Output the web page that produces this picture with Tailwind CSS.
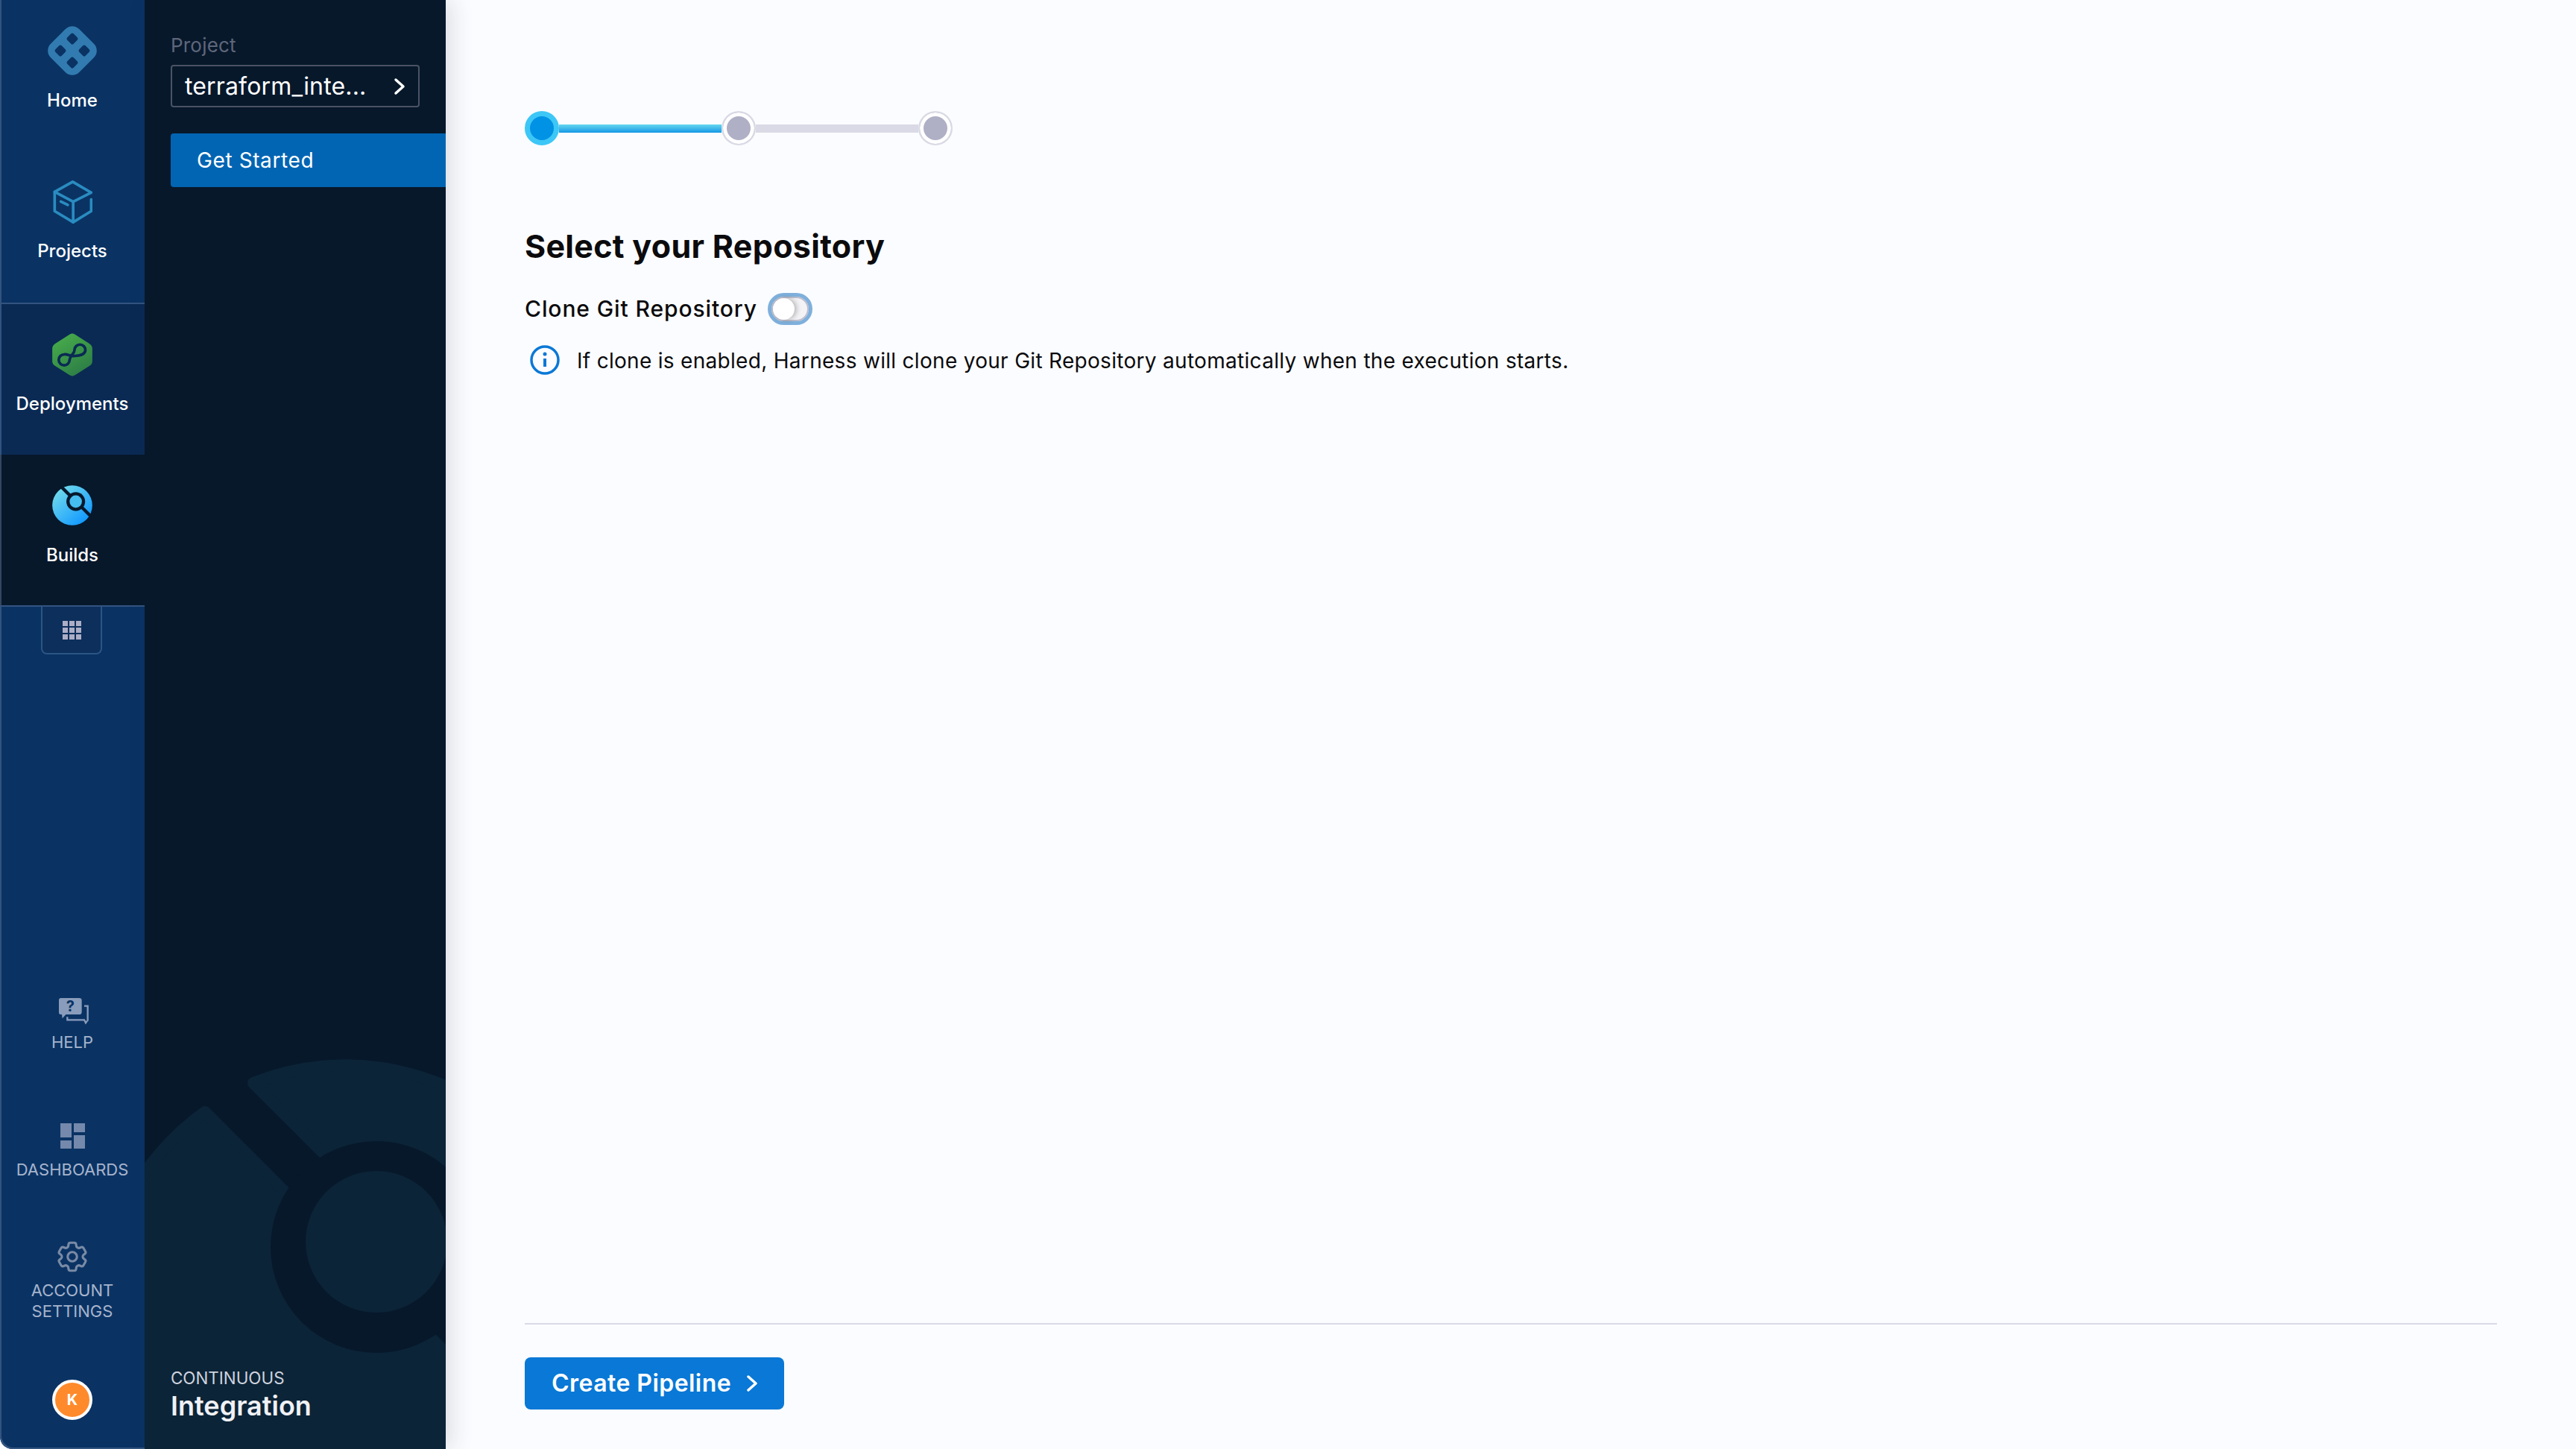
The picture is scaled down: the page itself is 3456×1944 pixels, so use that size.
<!DOCTYPE html>
<html lang="en">

<head>
  <meta charset="UTF-8">
  <title>Select your Repository</title>
  <script src="https://cdn.jsdelivr.net/npm/@tailwindcss/browser@4"></script>
</head>

<body class="bg-[#fbfcff] font-['Inter','Liberation_Sans',sans-serif]">
  <div class="flex w-[3456px] h-[1944px] overflow-hidden rounded-bl-[16px]">

    <!-- main nav -->
    <nav class="w-[194px] shrink-0 flex flex-col bg-[#0a3364] rounded-bl-[16px] text-white shadow-[inset_2px_-2px_0_#33537f]">
      <div class="border-b-2 border-[#33537f]">
        <a class="h-[203px] flex flex-col items-center pt-[32px]">
          <div class="h-[72px] flex items-center">
            <svg class="w-[66px] h-[66px]" viewBox="0 0 66 66">
              <g transform="rotate(45 33 33)">
                <rect x="6" y="6" width="54" height="54" rx="13" fill="#327bb0" />
                <rect x="15.700" y="15.700" width="12" height="12" rx="2.500" fill="#0a3364" />
                <rect x="38.300" y="15.700" width="12" height="12" rx="2.500" fill="#0a3364" />
                <rect x="15.700" y="38.300" width="12" height="12" rx="2.500" fill="#0a3364" />
                <rect x="38.300" y="38.300" width="12" height="12" rx="2.500" fill="#0a3364" />
              </g>
            </svg>
          </div>
          <span class="mt-[19px] text-[24px] leading-[24px] font-medium">Home</span>
        </a>
        <a class="h-[203px] flex flex-col items-center pt-[32px]">
          <div class="h-[72px] flex items-center">
            <svg class="w-[53px] h-[60px]" viewBox="0 0 160 180" fill="none" stroke="#2a8cc0" stroke-width="11" stroke-linejoin="round" stroke-linecap="round">
              <path d="M80 8 155 52 82 89 7 49Z" />
              <path d="M7 49V127L82 172 155 127V80" />
              <path d="M82 89V172" />
              <path d="M32 88 60 102" />
            </svg>
          </div>
          <span class="mt-[18px] text-[24px] leading-[24px] font-medium">Projects</span>
        </a>
      </div>
      <a class="h-[202px] bg-[#0a2a54] flex flex-col items-center pt-[32px] shadow-[inset_2px_0_0_#33537f]">
        <div class="h-[72px] flex items-center">
          <svg class="w-[54px] h-[58px]" viewBox="0 0 162 175">
            <defs>
              <linearGradient id="hex" x1="0.200" y1="0" x2="0.800" y2="1">
                <stop offset="0" stop-color="#48ac4b" />
                <stop offset="1" stop-color="#2b7b45" />
              </linearGradient>
            </defs>
            <path d="M70 5Q81-2 92 5L150 42Q162 50 162 62V113Q162 125 150 133L92 170Q81 177 70 170L12 133Q0 125 0 113V62Q0 50 12 42Z" fill="url(#hex)" />
            <path d="M48 86C62 84 74 94 90 92 104 91 134 90 134 68A22 22 0 0 0 90 68C90 84 72 88 70 108A22 22 0 0 1 26 108 22 22 0 0 1 48 86Z" fill="none" stroke="#0a2a54" stroke-width="11" />
          </svg>
        </div>
        <span class="mt-[18px] text-[24px] leading-[24px] font-medium">Deployments</span>
      </a>
      <a class="h-[202px] bg-[#07182b] flex flex-col items-center pt-[32px] shadow-[inset_2px_0_0_#33465f]">
        <div class="h-[72px] flex items-center">
          <svg class="w-[54px] h-[54px]" viewBox="0 0 162 163">
            <defs>
              <linearGradient id="ball" x1="0.100" y1="0.100" x2="0.800" y2="0.900">
                <stop offset="0" stop-color="#72dbeb" />
                <stop offset="1" stop-color="#139aff" />
              </linearGradient>
            </defs>
            <circle cx="81" cy="81.500" r="81" fill="url(#ball)" />
            <path d="M32 2 160 130" stroke="#07182b" stroke-width="13" />
            <circle cx="95" cy="66" r="38" fill="#07182b" />
            <circle cx="95" cy="66" r="25" fill="#45bdf0" />
          </svg>
        </div>
        <span class="mt-[19px] text-[24px] leading-[24px] font-medium">Builds</span>
      </a>
      <div class="h-[2px] bg-[#33537f] shrink-0"></div>
      <div class="w-[82px] h-[64px] ml-[55px] border-x-2 border-b-2 border-[#2b5585] rounded-b-[8px] bg-[#0c2f5c] flex items-center justify-center">
        <div class="grid grid-cols-3 gap-[2px] w-[25px]">
          <i class="h-[7px] bg-[#acaec5]"></i><i class="h-[7px] bg-[#acaec5]"></i><i class="h-[7px] bg-[#acaec5]"></i>
          <i class="h-[7px] bg-[#acaec5]"></i><i class="h-[7px] bg-[#acaec5]"></i><i class="h-[7px] bg-[#acaec5]"></i>
          <i class="h-[7px] bg-[#acaec5]"></i><i class="h-[7px] bg-[#acaec5]"></i><i class="h-[7px] bg-[#acaec5]"></i>
        </div>
      </div>

      <div class="mt-auto flex flex-col items-center pb-[39px] text-[22px] leading-[28px] text-[#a7b4cc] text-center">
        <svg class="w-[40px] h-[36px] translate-x-[2px]" viewBox="0 0 120 108">
          <path d="M8 0H82Q92 0 92 10V56Q92 66 82 66H28L14 82 12 66H8Q0 66 0 56V10Q0 0 8 0Z" fill="#8a9cbb" />
          <text x="46" y="54" text-anchor="middle" font-size="60" font-weight="700" fill="#0a3364" font-family="Inter, sans-serif">?</text>
          <path d="M102 32H116V92 M34 76V88H102L108 100 114 92" fill="none" stroke="#8a9cbb" stroke-width="7" />
        </svg>
        <span class="mt-[9px]">HELP</span>
        <div class="mt-[95px] flex gap-[3px] w-[33px] h-[34px]">
          <div class="flex flex-col gap-[4px] w-[15px]">
            <i class="h-[19px] bg-[#7489ac]"></i>
            <i class="h-[11px] bg-[#7489ac]"></i>
          </div>
          <div class="flex flex-col gap-[4px] w-[15px]">
            <i class="h-[12px] bg-[#7489ac]"></i>
            <i class="h-[18px] bg-[#7489ac]"></i>
          </div>
        </div>
        <span class="mt-[14px]">DASHBOARDS</span>
        <svg class="mt-[78px] w-[50px] h-[50px]" viewBox="0 0 24 24" fill="none" stroke="#7a8aa5" stroke-width="1.500">
          <path d="M9.594 3.94c.09-.542.56-.94 1.11-.94h2.593c.55 0 1.02.398 1.11.94l.213 1.281c.063.374.313.686.645.87.074.04.147.083.22.127.325.196.72.257 1.075.124l1.217-.456a1.125 1.125 0 0 1 1.37.49l1.296 2.247a1.125 1.125 0 0 1-.26 1.431l-1.003.827c-.293.241-.438.613-.43.992a7.723 7.723 0 0 1 0 .255c-.008.378.137.75.43.991l1.004.827c.424.35.534.955.26 1.43l-1.298 2.247a1.125 1.125 0 0 1-1.369.491l-1.217-.456c-.355-.133-.75-.072-1.076.124a6.47 6.47 0 0 1-.22.128c-.331.183-.581.495-.644.869l-.213 1.281c-.09.543-.56.94-1.11.94h-2.594c-.55 0-1.019-.398-1.11-.94l-.213-1.281c-.062-.374-.312-.686-.644-.87a6.52 6.52 0 0 1-.22-.127c-.325-.196-.72-.257-1.076-.124l-1.217.456a1.125 1.125 0 0 1-1.369-.49l-1.297-2.247a1.125 1.125 0 0 1 .26-1.431l1.004-.827c.292-.24.437-.613.43-.991a6.932 6.932 0 0 1 0-.255c.007-.38-.138-.751-.43-.992l-1.004-.827a1.125 1.125 0 0 1-.26-1.43l1.297-2.247a1.125 1.125 0 0 1 1.37-.491l1.216.456c.356.133.751.072 1.076-.124.072-.044.146-.086.22-.128.332-.183.582-.495.644-.869l.214-1.28Z" />
          <circle cx="12" cy="12" r="3" />
        </svg>
        <span class="mt-[6px]">ACCOUNT<br>SETTINGS</span>
        <div class="mt-[78px] w-[54px] h-[54px] rounded-full bg-[#ff8a2c] border-[4px] border-white flex items-center justify-center text-white text-[20px] font-bold">K</div>
      </div>
    </nav>

    <!-- secondary nav -->
    <aside class="relative z-10 w-[404px] shrink-0 overflow-hidden bg-[#07182b] shadow-[8px_0_28px_rgba(40,41,61,0.14)]">
      <svg class="absolute left-0 top-[1400px] w-[404px] h-[544px]" viewBox="194 1400 404 544">
        <g fill="#0c2437" stroke="#0c2437" stroke-width="16" stroke-linejoin="round">
          <path d="M340 1453A335 335 0 0 1 700 1527L800 1913Z" />
          <path d="M275 1492A335 335 0 0 0 465 2100H800L700 1917Z" />
        </g>
        <circle cx="505" cy="1673" r="142" fill="#07182b" />
        <circle cx="505" cy="1666" r="95" fill="#0c2437" />
      </svg>
      <div class="relative pl-[35px] pt-[47px]">
        <div class="text-[26px] leading-[28px] text-[#5f667b] tracking-[0.2px]">Project</div>
        <div class="mt-[12px] w-[334px] h-[57px] border-2 border-[#4a5365] rounded-[4px] flex items-center justify-between pl-[17px] pr-[17px] text-white text-[32px] tracking-[0.15px]">
          <span>terraform_inte...</span>
          <svg class="w-[16px] h-[24px]" viewBox="0 0 16 24" fill="none" stroke="white" stroke-width="3.500" stroke-linecap="round" stroke-linejoin="round">
            <path d="M3 3 13 12 3 21" />
          </svg>
        </div>
        <div class="mt-[35px] h-[72px] bg-[#0265b3] rounded-l-[4px] flex items-center pl-[35px] text-white text-[28px] tracking-[0.6px]">Get Started</div>
      </div>
      <div class="absolute left-[35px] bottom-[36px]">
        <div class="text-[22.400px] leading-[30px] text-[#cfd3df] translate-y-[2px]">CONTINUOUS</div>
        <div class="mt-[2px] text-[36px] leading-[44px] font-semibold text-[#f0f1f5]">Integration</div>
      </div>
    </aside>

    <!-- main content -->
    <main class="flex-1 flex flex-col pl-[106px] pr-[106px] pt-[149px] pb-[53px]">
      <div class="flex items-center">
        <div class="w-[46px] h-[46px] rounded-full bg-[#0092e4] border-[7px] border-[#3dc7f6] shrink-0"></div>
        <div class="w-[218px] h-[11px] bg-gradient-to-b from-[#63d8ee] to-[#0f97e6]"></div>
        <div class="w-[46px] h-[46px] rounded-full bg-[#afb0c6] border-[2px] border-[#d9dae5] shadow-[inset_0_0_0_5px_white] shrink-0"></div>
        <div class="w-[218px] h-[11px] bg-[#d9dae5]"></div>
        <div class="w-[46px] h-[46px] rounded-full bg-[#afb0c6] border-[2px] border-[#d9dae5] shadow-[inset_0_0_0_5px_white] shrink-0"></div>
      </div>

      <h1 class="mt-[110px] text-[43px] leading-[50px] font-bold text-[#0b0b0d] tracking-[0.3px]">Select your Repository</h1>

      <div class="mt-[37px] flex items-center h-[44px]">
        <span class="text-[30px] font-medium text-[#0b0b0d] tracking-[0.9px]">Clone Git Repository</span>
        <div class="ml-[14px] w-[60px] h-[43px] rounded-full border-[5px] border-[#7fb0dc] bg-[#f3f3f6] flex items-center shadow-[inset_0_0_0_2px_#bcbdcc]">
          <div class="w-[29px] h-[29px] rounded-full bg-white shadow-[3px_0_6px_rgba(0,0,0,0.25)] ml-[2px]"></div>
        </div>
      </div>

      <div class="mt-[27px] flex items-center ml-[7px]">
        <svg class="w-[40px] h-[40px]" viewBox="0 0 40 40" fill="none" stroke="#0b78d6" stroke-width="3.500">
          <circle cx="20" cy="20" r="18" />
          <path d="M20 18V29" stroke-width="4" />
          <circle cx="20" cy="12" r="2.500" fill="#0b78d6" stroke="none" />
        </svg>
        <span class="ml-[23px] text-[28px] leading-[40px] text-[#0b0b0d] tracking-[0.3px] translate-y-[1px]">If clone is enabled, Harness will clone your Git Repository automatically when the execution starts.</span>
      </div>

      <div class="mt-auto border-t-2 border-[#d9dae5] pt-[44px]">
        <button class="w-[348px] h-[70px] bg-[#0978d6] rounded-[8px] flex items-center pl-[36px] text-white text-[32px] font-semibold tracking-[0.45px]">
          Create Pipeline
          <svg class="ml-[21px] w-[14px] h-[24px]" viewBox="0 0 14 24" fill="none" stroke="white" stroke-width="3.500" stroke-linecap="round" stroke-linejoin="round">
            <path d="M2 3 12 12 2 21" />
          </svg>
        </button>
      </div>
    </main>
  </div>
</body>

</html>
